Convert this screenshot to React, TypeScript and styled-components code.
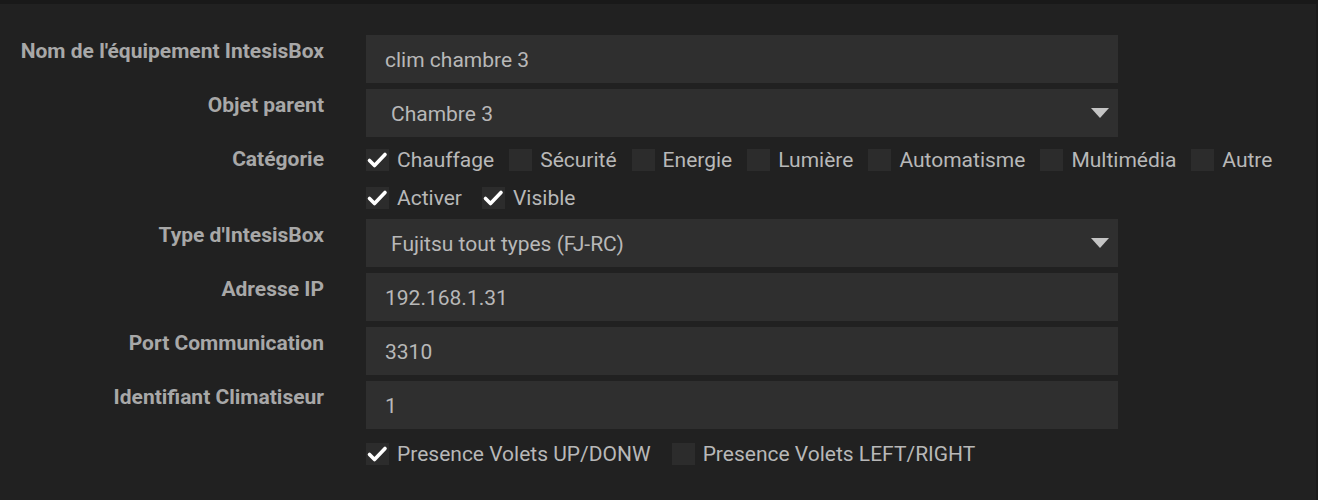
import React from 'react';
import styled, { createGlobalStyle } from 'styled-components';

const GlobalStyle = createGlobalStyle`
  html, body {
    margin: 0;
    padding: 0;
    background: #212121;
  }
  body {
    font-family: Roboto, "Liberation Sans", sans-serif;
  }
`;

const Page = styled.div`
  min-height: 500px;
  background: #212121;
  border-top: 4px solid #191919;
  border-right: 2px solid #1b1b1b;
  box-sizing: border-box;
  padding-top: 31px;
`;

const Form = styled.div`
  display: grid;
  grid-template-columns: 324px 1fr;
  column-gap: 42px;
`;

const Label = styled.div`
  text-align: right;
  font-size: 21px;
  font-weight: 700;
  line-height: 28px;
  padding-top: 2px;
  color: #a8a8a8;
  white-space: nowrap;
`;

const Field = styled.div<{ $mb?: number }>`
  margin-bottom: ${({ $mb }) => ($mb ?? 6)}px;
  min-width: 0;
`;

const TextBox = styled.div`
  width: 752px;
  height: 48px;
  box-sizing: border-box;
  background: #2f2f2f;
  color: #b8b8b8;
  font-size: 21px;
  line-height: 50px;
  padding: 0 19px;
`;

const SelectBox = styled(TextBox)`
  display: flex;
  align-items: center;
  justify-content: space-between;
  padding: 2px 9px 0 25px;
`;

const Arrow = styled.span`
  width: 0;
  height: 0;
  margin-top: -3px;
  border-left: 9px solid transparent;
  border-right: 9px solid transparent;
  border-top: 10px solid #c4c4c4;
`;

const CheckRow = styled.div<{ $h?: number; $gap?: number }>`
  display: flex;
  align-items: center;
  height: ${({ $h }) => $h ?? 33}px;
  gap: ${({ $gap }) => $gap ?? 15}px;
`;

const CheckGroup = styled.div`
  display: flex;
  flex-direction: column;
  gap: 5px;
`;

const CheckItem = styled.label`
  display: flex;
  align-items: center;
  gap: 8px;
  font-size: 21px;
  color: #b8b8b8;
  white-space: nowrap;
`;

const Box = styled.span`
  width: 23px;
  height: 22px;
  background: #2c2c2c;
  display: inline-flex;
  align-items: center;
  justify-content: center;
  flex: none;
`;

const Check: React.FC<{ label: string; checked?: boolean }> = ({ label, checked }) => (
  <CheckItem>
    <Box>
      {checked && (
        <svg width="23" height="22" viewBox="0 0 23 22">
          <path d="M3.5 11.5 L8.5 16.5 L19 5.5" fill="none" stroke="#ffffff" strokeWidth="3.6" strokeLinecap="round" strokeLinejoin="round" />
        </svg>
      )}
    </Box>
    {label}
  </CheckItem>
);

const App: React.FC = () => {
  return (
    <>
      <GlobalStyle />
      <Page>
        <Form>
          <Label>Nom de l'équipement IntesisBox</Label>
          <Field>
            <TextBox>clim chambre 3</TextBox>
          </Field>

          <Label>Objet parent</Label>
          <Field>
            <SelectBox>
              Chambre 3
              <Arrow />
            </SelectBox>
          </Field>

          <Label>Catégorie</Label>
          <Field $mb={5}>
            <CheckGroup>
              <CheckRow>
                <Check label="Chauffage" checked />
                <Check label="Sécurité" />
                <Check label="Energie" />
                <Check label="Lumière" />
                <Check label="Automatisme" />
                <Check label="Multimédia" />
                <Check label="Autre" />
              </CheckRow>
              <CheckRow $gap={20}>
                <Check label="Activer" checked />
                <Check label="Visible" checked />
              </CheckRow>
            </CheckGroup>
          </Field>

          <Label>Type d'IntesisBox</Label>
          <Field>
            <SelectBox>
              Fujitsu tout types (FJ-RC)
              <Arrow />
            </SelectBox>
          </Field>

          <Label>Adresse IP</Label>
          <Field>
            <TextBox>192.168.1.31</TextBox>
          </Field>

          <Label>Port Communication</Label>
          <Field>
            <TextBox>3310</TextBox>
          </Field>

          <Label>Identifiant Climatiseur</Label>
          <Field>
            <TextBox>1</TextBox>
          </Field>

          <div />
          <Field>
            <CheckRow $h={38} $gap={21}>
              <Check label="Presence Volets UP/DONW" checked />
              <Check label="Presence Volets LEFT/RIGHT" />
            </CheckRow>
          </Field>
        </Form>
      </Page>
    </>
  );
};

export default App;
